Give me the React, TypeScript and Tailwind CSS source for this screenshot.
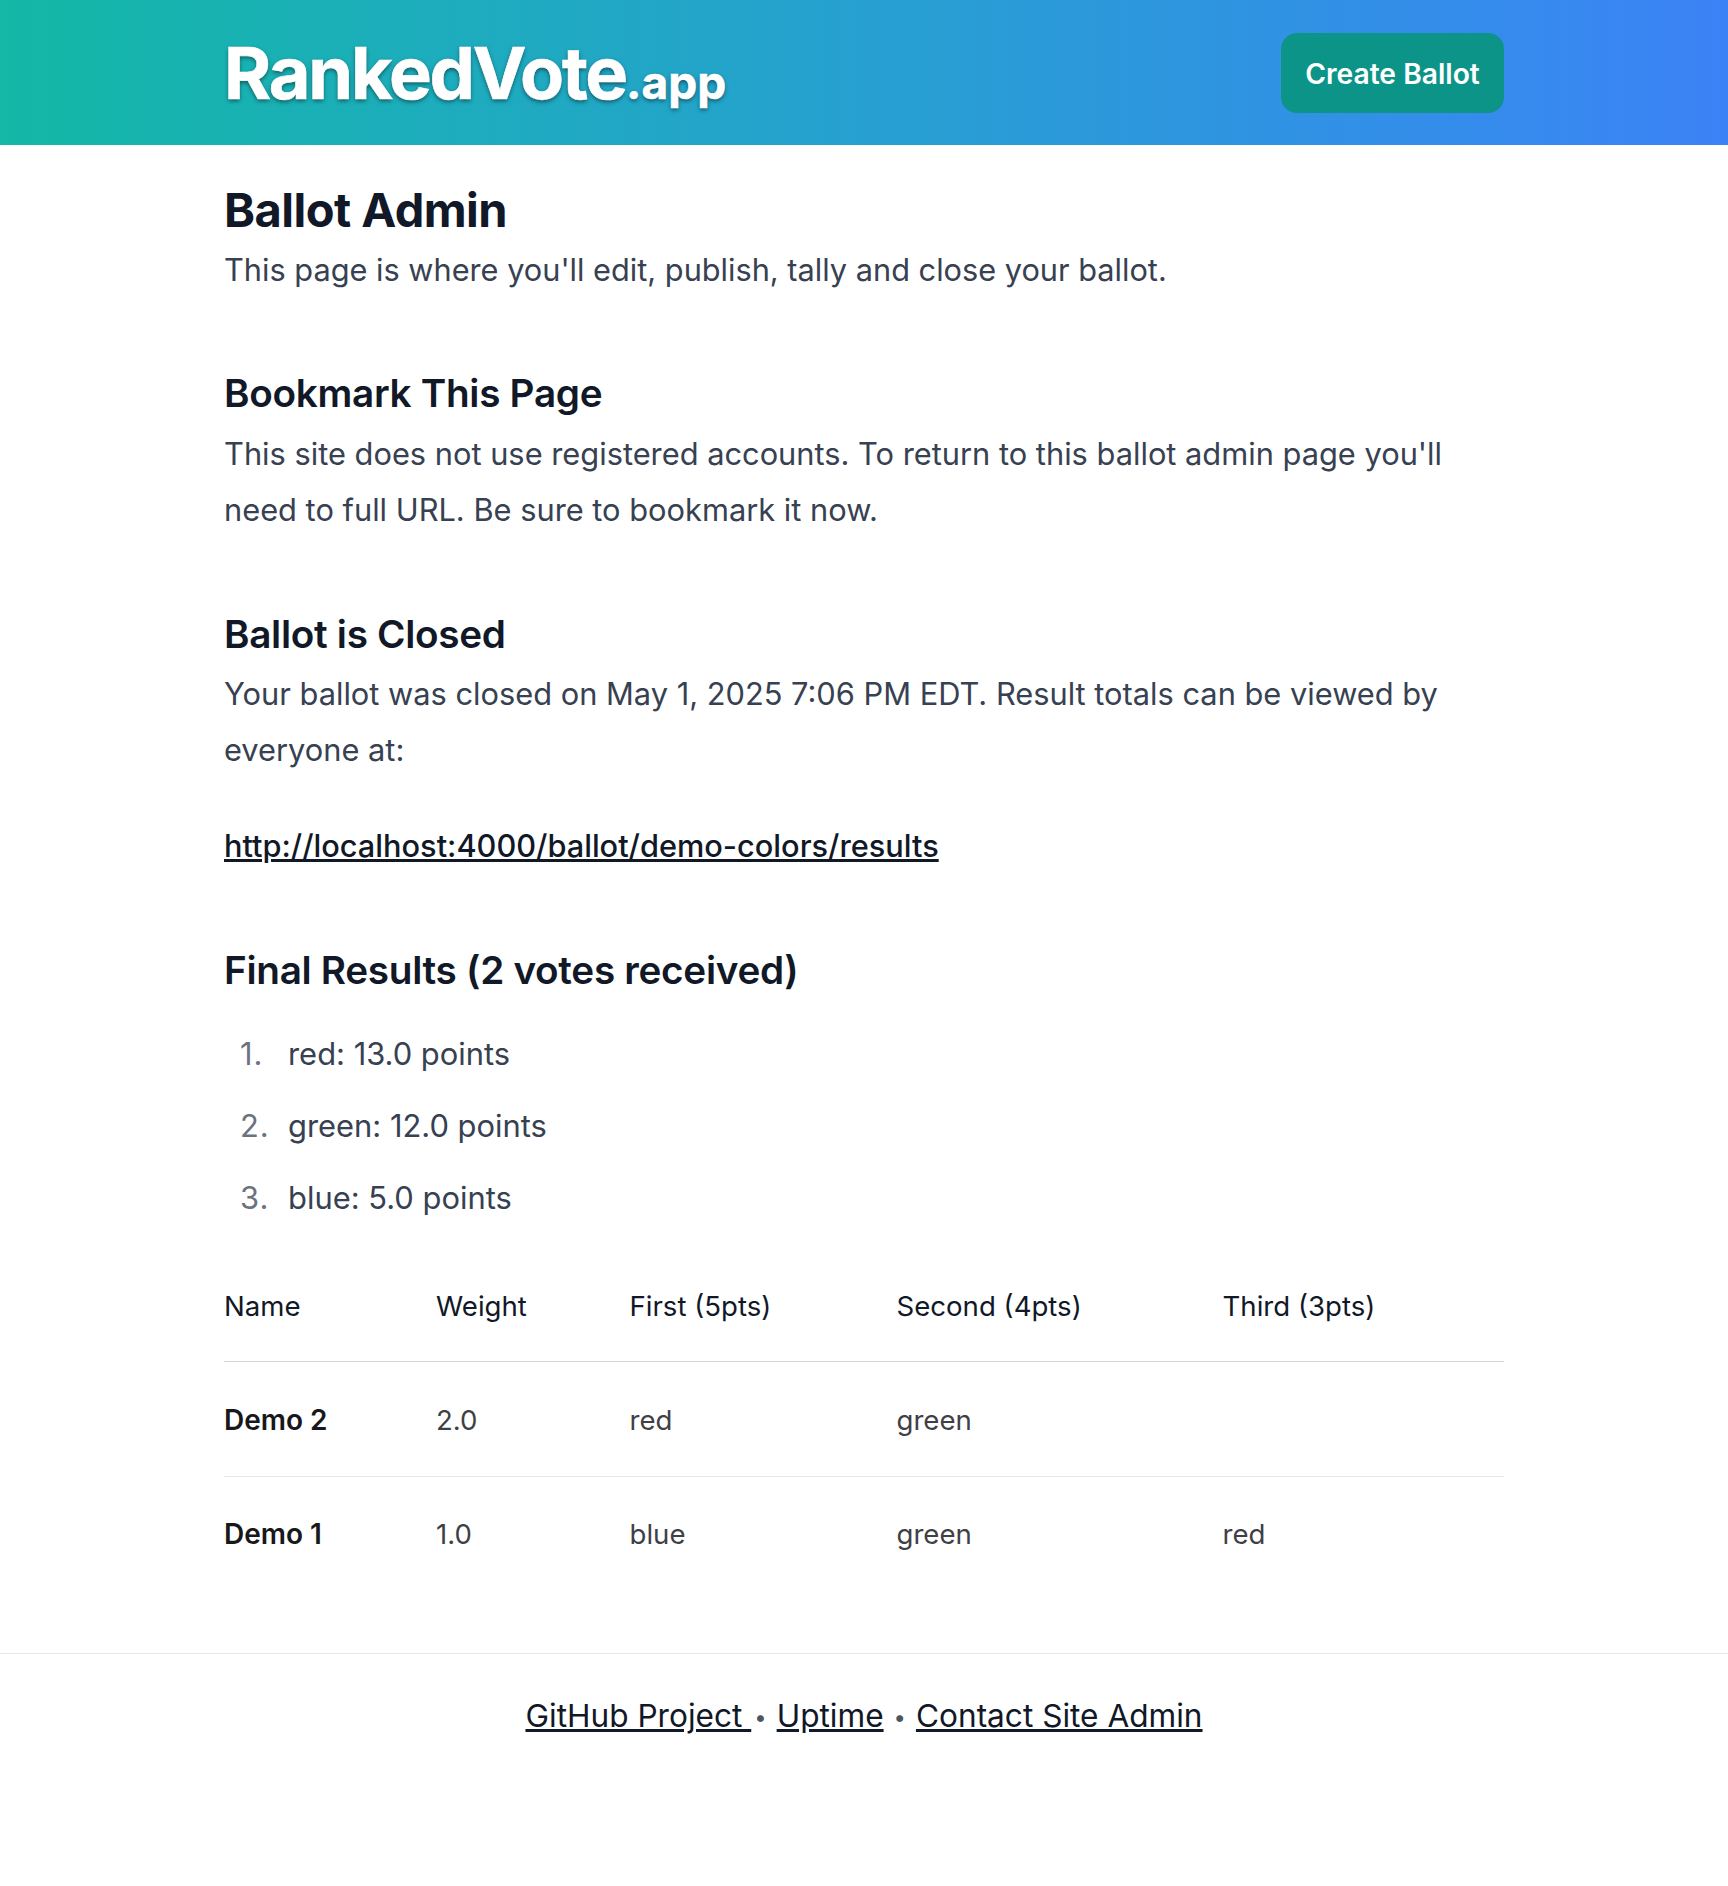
export default function App() {
  const h2 = "text-[38.7px] leading-[48px] font-semibold text-[#111827] tracking-[-0.3px]";
  const p = "text-[30.8px] leading-[56px] text-[#374151]";
  const th = "text-left font-normal pb-[35px] pt-0 text-[#111827]";
  const td = "pt-[38px] pb-[36px] text-[#3f3f46]";
  const td2 = "pt-[37px] pb-[37px] text-[#3f3f46]";
  return (
    <div className="min-h-[1886px] bg-white font-['Inter',sans-serif]">
      <header className="h-[145px] bg-gradient-to-r from-[#14b8a6] to-[#3b82f6]">
        <div className="w-[1280px] mx-auto h-full flex items-center justify-between">
          <a className="pt-[1px] font-bold text-white text-[72px] leading-none tracking-[-2.2px] [-webkit-text-stroke:0.6px_white] [text-shadow:0_2px_4px_rgba(0,0,0,0.5)]">
            RankedVote<span className="text-[46px] tracking-normal">.app</span>
          </a>
          <button className="w-[223px] h-[80px] pt-[4px] rounded-[16px] bg-[#0d9488] text-white text-[28.2px] font-semibold">Create Ballot</button>
        </div>
      </header>
      <main className="w-[1280px] mx-auto">
        <h1 className="mt-[37px] text-[47px] leading-[56px] font-bold text-[#111827] tracking-[-0.55px]">Ballot Admin</h1>
        <p className="mt-[8px] text-[30.72px] leading-[48px] text-[#374151]">This page is where you'll edit, publish, tally and close your ballot.</p>
        <h2 className={h2 + " mt-[75px]"}>Bookmark This Page</h2>
        <p className={p + " mt-[9px]"}>This site does not use registered accounts. To return to this ballot admin page you'll need to full URL. Be sure to bookmark it now.</p>
        <h2 className={h2 + " mt-[72px]"}>Ballot is Closed</h2>
        <p className={p + " mt-[8px]"}>Your ballot was closed on May 1, 2025 7:06 PM EDT. Result totals can be viewed by everyone at:</p>
        <p className="mt-[40px] text-[30.72px] leading-[56px]"><a className="underline font-medium text-[#111827]">http://localhost:4000/ballot/demo-colors/results</a></p>
        <h2 className={h2 + " mt-[72px]"}>Final Results (2 votes received)</h2>
        <ol className="mt-[24px]">
          {["red: 13.0 points", "green: 12.0 points", "blue: 5.0 points"].map((t, i) => (
            <li key={t} className="flex h-[72px] items-center text-[30.9px] text-[#374151]">
              <span className="w-[64px] pl-[16px] text-[#6b7280] tracking-[1px]">{i + 1}.</span>{t}
            </li>
          ))}
        </ol>
        <table className="w-full mt-[52px] text-[27.6px] leading-[40px] border-collapse">
          <thead>
            <tr className="border-b border-[#d1d5db]">
              <th className={th + " w-[212px]"}>Name</th>
              <th className={th + " w-[193.5px]"}>Weight</th>
              <th className={th + " w-[267px]"}>First (5pts)</th>
              <th className={th + " w-[326px]"}>Second (4pts)</th>
              <th className={th}>Third (3pts)</th>
            </tr>
          </thead>
          <tbody>
            <tr className="border-b border-[#e5e7eb]">
              <td className={td + " font-semibold text-[#18181b] text-[28px]"}>Demo 2</td>
              <td className={td}>2.0</td>
              <td className={td}>red</td>
              <td className={td}>green</td>
              <td className={td}></td>
            </tr>
            <tr>
              <td className={td2 + " font-semibold text-[#18181b] text-[28px]"}>Demo 1</td>
              <td className={td2}>1.0</td>
              <td className={td2}>blue</td>
              <td className={td2}>green</td>
              <td className={td2}>red</td>
            </tr>
          </tbody>
        </table>
      </main>
      <footer className="mt-[62px] border-t border-[#e5e7eb] pt-[38px] text-center text-[31.6px] leading-[48px] text-[#4b5563]">
        <a className="underline text-[#111827]">GitHub Project </a><span className="text-[22px] ml-[3px] mr-[10px] align-[2px]">•</span><a className="underline text-[#111827]">Uptime</a><span className="text-[22px] mx-[10px] align-[2px]">•</span><a className="underline text-[#111827]">Contact Site Admin</a>
      </footer>
    </div>
  );
}
